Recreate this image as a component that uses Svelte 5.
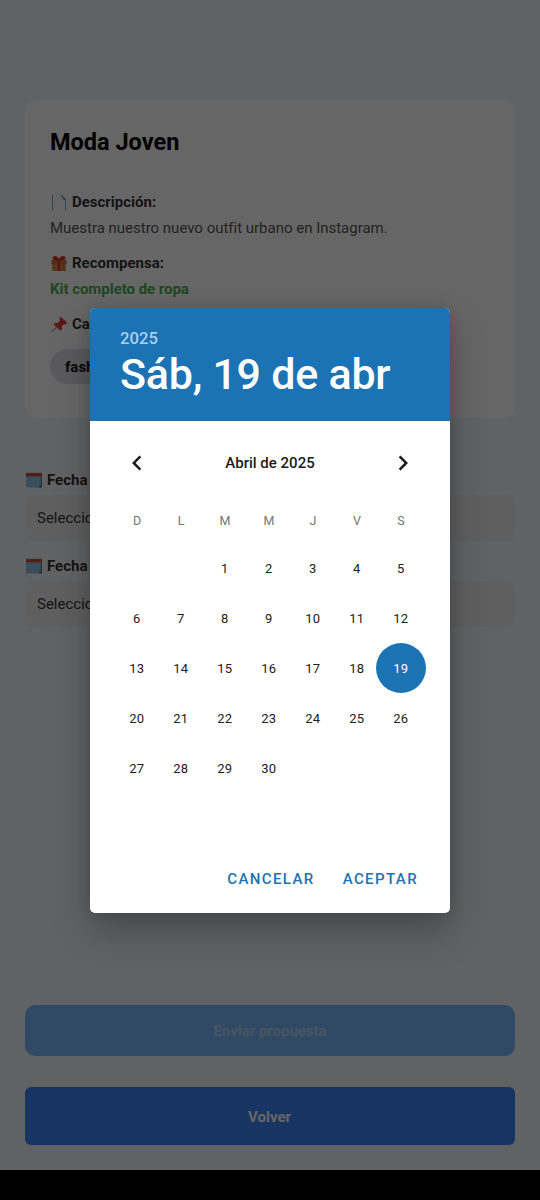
<script>
  const weekdays = ['D', 'L', 'M', 'M', 'J', 'V', 'S'];
  const blanks = [0, 1];
  const days = Array.from({ length: 30 }, (_, i) => i + 1);
  let selected = $state(19);
</script>

{#snippet calendarIcon()}
  <svg class="icon" width="18" height="17" viewBox="0 0 18 17">
    <path d="M1 2.500h16v13H1z" fill="#a9cce2" />
    <path d="M1.500 4.500h14V15h-14z" fill="#86bde2" />
    <path d="M2 7.500h13M2 10h13M2 12.500h11M5 5.500v9M8.500 5.500v9M12 5.500v9" stroke="#a8d0ea" stroke-width=".5" />
    <path d="M1 1h16v3.300H1z" fill="#d04437" />
    <path d="M3 .3v2M6 .3v2M9 .3v2M12 .3v2M15 .3v2" stroke="#8c8c8c" stroke-width=".8" />
    <path d="M15.800 4.500H17v11h-3.500l2.300-2.500z" fill="#567184" />
  </svg>
{/snippet}

<div class="screen">
  <main>
    <section class="card">
      <h1>Moda Joven</h1>
      <div class="label first">
        <svg class="icon" width="18" height="17" viewBox="0 0 18 17">
          <path d="M2.500 1v15.500" stroke="#73a9cf" stroke-width="1" />
          <path d="M10.500 1.300h1.500l4 4v1.500l-2.500-1z" fill="#6ea8d4" />
          <path d="M15.500 5.500v11" stroke="#7fabc9" stroke-width="1" />
        </svg>
        <span>Descripción:</span>
      </div>
      <p>Muestra nuestro nuevo outfit urbano en Instagram.</p>
      <div class="label">
        <svg class="icon" width="18" height="17" viewBox="0 0 18 17">
          <path d="M2 6h14v10H2z" fill="#d99447" />
          <path d="M1.500 5h15v4h-15z" fill="#c97634" />
          <path d="M7.500 5h3v11h-3z" fill="#e33b2e" />
          <path d="M9 5C5 6 2 5 2.500 2.500 3 0 8 .5 9 4c1-3.500 6-4 6.500-1.500C16 5 13 6 9 5z" fill="#ee3a2c" />
          <path d="M4.500 2.800l3 1.400M13.500 2.800l-3 1.400" stroke="#8e221c" stroke-width="1" />
          <path d="M4.500 9v6M13.500 9v6" stroke="#b86b2c" stroke-width=".8" />
        </svg>
        <span>Recompensa:</span>
      </div>
      <p class="reward">Kit completo de ropa</p>
      <div class="label">
        <svg class="icon" width="18" height="17" viewBox="0 0 18 17">
          <path d="M7 10.500L1.500 16" stroke="#93b7d4" stroke-width="1.300" />
          <path d="M10.500 .8l6.500 5.500-.8 2.200-2.200-.3-2.500 2 .5 2.900-1.900 1.400L3.500 8.500 5 6.800l3 .1 2-2.400-.5-2z" fill="#e0392e" />
          <path d="M11 1.800l5 4.400M5 7.800l5 5" stroke="#fb6a56" stroke-width="1" />
        </svg>
        <span>Ca</span>
      </div>
      <span class="chip">fash</span>
    </section>

    <section class="dates">
      <div class="field-label">{@render calendarIcon()}<span>Fecha</span></div>
      <div class="field">Seleccio</div>
      <div class="field-label">{@render calendarIcon()}<span>Fecha</span></div>
      <div class="field">Seleccio</div>
    </section>

    <div class="buttons">
      <button class="send">Enviar propuesta</button>
      <button class="back">Volver</button>
    </div>
  </main>
  <div class="navbar"></div>

  <div class="overlay">
    <div class="dialog">
      <header>
        <div class="year">2025</div>
        <div class="date">Sáb, 19 de abr</div>
      </header>
      <div class="month">
        <svg width="30" height="30" viewBox="0 0 24 24"><path d="M15.410 7.410L14 6l-6 6 6 6 1.410-1.410L10.830 12z" fill="#1b1b1b" /></svg>
        <span>Abril de 2025</span>
        <svg width="30" height="30" viewBox="0 0 24 24"><path d="M10 6L8.590 7.410 13.170 12l-4.580 4.590L10 18l6-6z" fill="#1b1b1b" /></svg>
      </div>
      <div class="grid week">
        {#each weekdays as d}<span>{d}</span>{/each}
      </div>
      <div class="grid days">
        {#each blanks as _}<span></span>{/each}
        {#each days as d}
          <button class="day" class:selected={d === selected} onclick={() => (selected = d)}>{d}</button>
        {/each}
      </div>
      <footer>
        <button>CANCELAR</button>
        <button>ACEPTAR</button>
      </footer>
    </div>
  </div>
</div>

<style>
  :global(body) { margin: 0; background: #000; }
  * { box-sizing: border-box; }
  button { font: inherit; border: 0; padding: 0; background: none; }
  svg { display: block; flex: none; }
  .screen {
    position: relative;
    width: 540px;
    height: 1200px;
    overflow: hidden;
    display: flex;
    flex-direction: column;
    font-family: Roboto, sans-serif;
    color: #333;
  }
  main {
    height: 1170px;
    padding: 100px 25px 25px;
    background: #f2f4f7;
    display: flex;
    flex-direction: column;
  }
  .navbar { flex: 1; background: #000; }
  .card {
    height: 318px;
    padding: 25px;
    border-radius: 12px;
    background: #fff;
  }
  h1 { margin: 0; font-size: 23.500px; line-height: 34px; font-weight: 700; color: #000; }
  .label, .field-label {
    display: flex;
    align-items: center;
    gap: 4px;
    height: 22px;
    font-size: 15px;
    font-weight: 700;
    color: #333;
    white-space: nowrap;
  }
  .label { margin-top: 11px; }
  .label.first { margin-top: 32px; }
  p { margin: 2px 0 0; font-size: 15px; line-height: 26px; letter-spacing: -.01px; color: #555; height: 26px; }
  p.reward { color: #4caf50; font-weight: 700; letter-spacing: -.04px; }
  .chip {
    display: flex;
    align-items: center;
    width: 84px;
    height: 35px;
    margin-top: 14px;
    padding: 0 15px;
    border-radius: 18px;
    background: #e0e0e8;
    color: #111;
    font-size: 15px;
    font-weight: 700;
  }
  .dates { margin-top: 51px; }
  .field {
    height: 46px;
    margin: 4px 0 14px;
    padding: 0 12px;
    border-radius: 8px;
    background: #eee;
    font-size: 15px;
    line-height: 46px;
    color: #333;
  }
  .buttons { margin-top: auto; display: flex; flex-direction: column; gap: 31px; }
  .buttons button { font-size: 15px; font-weight: 700; letter-spacing: -.02px; }
  .send { height: 51px; border-radius: 10px; background: #78b9fc; color: #b4d2f2; }
  .buttons .back { height: 58px; padding: 2px 1px 0 0; border-radius: 6px; background: #3b82f6; color: #fff; }

  .overlay {
    position: absolute;
    inset: 0 0 30px;
    background: rgba(0, 0, 0, .6);
    display: flex;
    justify-content: center;
    align-items: flex-start;
    padding-top: 308px;
  }
  .dialog {
    width: 360px;
    height: 605px;
    border-radius: 5px;
    background: #fff;
    overflow: hidden;
    display: flex;
    flex-direction: column;
    box-shadow: 0 18px 36px rgba(0, 0, 0, .25), 0 0 14px rgba(0, 0, 0, .12);
  }
  header { height: 113px; padding: 19px 30px 0; background: #1b73b4; color: #fff; }
  .year { font-size: 16.700px; line-height: 23px; font-weight: 500; color: #a9d0ee; }
  .date { font-size: 43px; line-height: 48px; letter-spacing: -.25px; font-weight: 500; white-space: nowrap; }
  .month {
    display: flex;
    justify-content: space-between;
    align-items: center;
    height: 30px;
    margin: 27px 32px 0;
    font-size: 15px;
    font-weight: 500;
    color: #1b1b1b;
  }
  .grid { display: grid; grid-template-columns: repeat(7, 44px); margin-left: 25px; text-align: center; }
  .week { margin-top: 33px; font-size: 12.500px; line-height: 20px; color: #757575; }
  .days { margin-top: 12px; grid-auto-rows: 50px; justify-items: center; }
  .day { width: 50px; height: 50px; padding-right: .5px; border-radius: 50%; font-size: 13px; letter-spacing: .3px; color: #212121; margin: 0 -3px; }
  .day.selected { background: #1b73b4; color: #fff; }
  footer {
    margin-top: auto;
    height: 70px;
    padding: 1px 32px 0 0;
    display: flex;
    justify-content: flex-end;
    gap: 28px;
  }
  footer button { height: 70px; font-size: 15px; font-weight: 500; letter-spacing: 1.400px; color: #1b73b4; }
</style>
